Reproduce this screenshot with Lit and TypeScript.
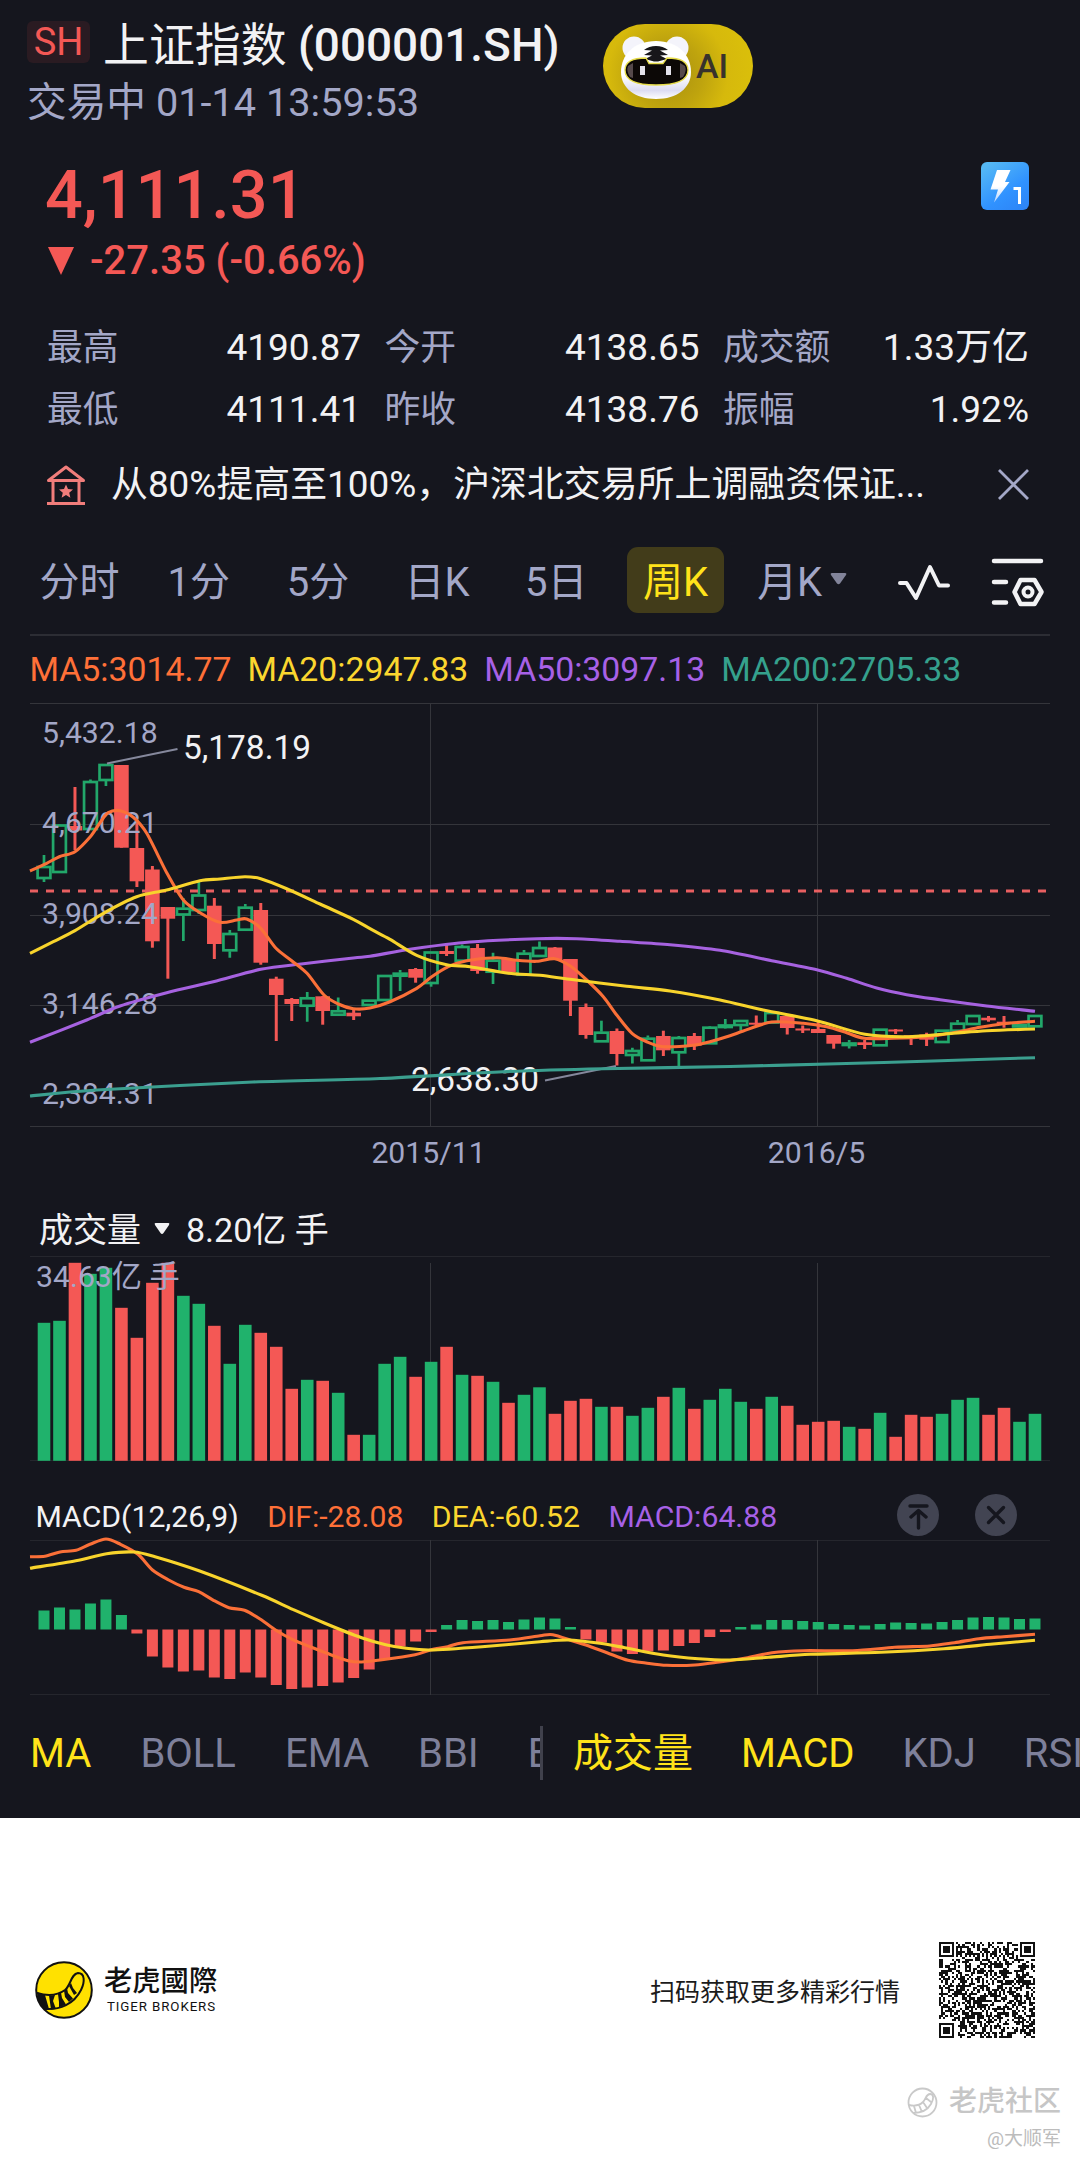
import { LitElement, css, html, svg } from "lit";
import { customElement, property } from "lit/decorators.js";
import { classMap } from "lit/directives/class-map.js";

type Point = [number, number];
// up/down, high, body top, body bottom, low (canvas y)
type Candle = [string, number, number, number, number];

const FIRST_X = 44;
const STEP = 15.484;
const MONTH_LINES = [430.5, 817.5];

const centerX = (i: number) => FIRST_X + i * STEP;

const CANDLES: Candle[] = [
  ["u", 855, 866, 879, 882], ["u", 824, 824.5, 873, 873], ["d", 787, 826, 830.5, 850],
  ["u", 779.5, 781, 830, 830], ["u", 764, 764, 781, 786], ["d", 765, 765, 847.7, 847.7],
  ["d", 820, 848, 881.3, 887], ["d", 866, 869.5, 941.3, 947.7], ["d", 907, 907, 918.7, 978.7],
  ["u", 898, 907.7, 915.5, 941], ["u", 882, 894.5, 911, 914], ["d", 898, 905.7, 944, 959],
  ["u", 930, 933, 951.3, 957.7], ["u", 904, 906.7, 930.7, 930.7], ["d", 903, 910, 962.7, 964.7],
  ["d", 976.7, 978.7, 995, 1041], ["d", 998, 999, 1004, 1021], ["u", 992, 997.3, 1006.7, 1021.7],
  ["d", 996, 996.3, 1011, 1024.7], ["u", 997.5, 1010.3, 1015.7, 1015.7], ["d", 1010, 1012.7, 1016.3, 1020],
  ["u", 999.7, 999.7, 1006, 1006], ["u", 975, 975, 1001, 1001], ["u", 970, 972.7, 976.7, 991],
  ["d", 968, 969, 977.7, 982.7], ["u", 951.5, 951.5, 984, 986.7], ["d", 943.5, 951, 954, 956],
  ["u", 944.5, 946, 961.7, 961.7], ["d", 944, 948, 971, 973.7], ["u", 952.7, 959.7, 972.7, 984],
  ["d", 958, 959, 972, 972], ["u", 950, 952.7, 975.7, 975.7], ["u", 941.5, 947, 957, 957],
  ["d", 947, 947.5, 960, 960], ["d", 959, 959, 1000.7, 1016], ["d", 1003.5, 1007, 1035, 1038.7],
  ["u", 1020.7, 1031.7, 1042.3, 1042.3], ["d", 1028.5, 1031, 1054, 1065.5], ["u", 1047.7, 1050, 1056, 1063.5],
  ["u", 1035.5, 1037.7, 1061.3, 1061.3], ["d", 1030.7, 1036, 1050.3, 1056], ["u", 1036, 1037, 1053.3, 1066],
  ["d", 1033, 1036, 1045.7, 1050], ["u", 1026, 1026.7, 1044.3, 1044.3], ["u", 1019, 1024.5, 1027, 1028.5],
  ["u", 1020, 1020, 1026, 1030.7], ["d", 1015.5, 1022.7, 1024.7, 1027], ["u", 1011, 1012, 1023.5, 1023.5],
  ["d", 1015.5, 1016, 1028, 1034.5], ["d", 1025.5, 1028.5, 1030.5, 1033], ["d", 1022, 1029, 1033, 1033],
  ["d", 1035, 1035, 1043.7, 1048.7], ["u", 1040, 1042.5, 1046, 1048.5], ["d", 1040, 1042.3, 1045, 1049],
  ["u", 1028.7, 1028.7, 1046.3, 1046.3], ["d", 1029, 1029.5, 1031.5, 1034], ["d", 1035, 1035.3, 1037.5, 1045],
  ["d", 1032.7, 1034.5, 1039.7, 1046], ["u", 1029.7, 1029.7, 1043, 1043], ["u", 1020, 1022.7, 1031.7, 1031.7],
  ["u", 1015, 1015, 1025, 1025], ["d", 1016, 1017.7, 1020.3, 1021.7], ["d", 1016, 1021.7, 1023.7, 1027.7],
  ["u", 1024, 1024, 1026.7, 1026.7], ["u", 1015, 1015, 1027.3, 1027.3]
];

const VOLUMES = [
  138, 140, 198, 187, 193, 153, 123, 178, 198, 165, 157, 135, 97, 136, 128, 114, 72, 81, 80, 68, 26, 26,
  97, 104, 84, 99, 114, 86, 85, 79, 58, 66, 73.5, 47, 60, 62, 54, 54, 45, 53, 64, 73, 52, 61, 72, 59, 52,
  64, 55, 36, 39, 40, 34, 32, 48, 24, 46, 44, 47, 61, 63, 46, 53, 39, 47
];

const MACD_BARS = [
  19, 22, 20, 26, 30, 14.5, -4, -27, -38, -42, -41, -48, -49.5, -43, -48, -55.5, -59.5, -58, -56.5, -53,
  -48.5, -40, -30, -17, -12, -2.5, 4.5, 9.5, 8.5, 9.5, 7.5, 10, 12, 11, 2.5, -10, -13, -22, -24.5, -22,
  -21, -16.5, -13.5, -7.5, -2.5, 2.5, 5, 9.5, 9.5, 8.5, 7.5, 5.5, 4.5, 4, 5.5, 7, 6.5, 6, 7.5, 9.5, 12,
  12.5, 12, 10.5, 11
];

const MA5: Point[] = [
  [30, 871], [46.7, 863.3], [59.3, 856.7], [75, 851.7], [90.3, 836.7], [100, 822.7], [108.3, 812.7],
  [120, 810.7], [133.3, 817.3], [146.7, 833.3], [166.7, 872.7], [183.3, 900], [200, 912.7], [220, 922.3],
  [236.7, 920], [246.7, 919], [260.7, 928.3], [276, 948.3], [291.7, 960.7], [307, 973.3], [324, 995],
  [338.3, 1004], [353.3, 1008.7], [370, 1008], [390, 1001.7], [416.7, 988.3], [431, 977.3], [448.3, 966.7],
  [466.7, 960.7], [496.7, 957.7], [516.7, 960.3], [536.7, 961.3], [554.7, 958.7], [570.3, 966],
  [586.7, 980], [603.3, 996.7], [616.7, 1015], [632, 1033.3], [646.7, 1041.7], [663.3, 1046.7],
  [693.3, 1045.3], [710, 1041.7], [730, 1035.7], [743.3, 1031], [771.7, 1022], [803.3, 1023.3],
  [826.7, 1026.7], [846.7, 1032.7], [864.3, 1038.3], [893.3, 1038.3], [926.7, 1036.7], [953.3, 1032.7],
  [980, 1027.3], [1003.3, 1023.7], [1035, 1021.3]
];

const MA20: Point[] = [
  [30, 953.3], [53.3, 941.7], [75, 930.7], [103.3, 913.3], [136.7, 896.7], [166.7, 890], [200, 880.7],
  [220, 879], [245, 876.7], [260.7, 878.7], [286.7, 888.7], [320, 904], [353.3, 919.3], [370, 928.7],
  [390, 939.3], [416.7, 955.3], [446.7, 964.7], [470, 966.7], [508.3, 973.3], [540, 975.3], [570, 979.3],
  [626.7, 986.3], [670, 991], [720, 1000], [763.3, 1010], [816.7, 1020.7], [865, 1034.3], [906.7, 1036.7],
  [953.3, 1033.3], [986.7, 1030.7], [1035, 1029]
];

const MA50: Point[] = [
  [30, 1042.3], [86.7, 1020], [120, 1006], [166.7, 992.7], [213.3, 981.7], [260.7, 969.3], [303.3, 963.7],
  [353.3, 958], [370, 956.3], [413.3, 948.7], [470, 942], [536.7, 938.7], [576.7, 938.7], [620, 941.3],
  [670, 944.7], [720, 950.3], [771.7, 960.7], [816.7, 969.7], [846.7, 978.3], [876.7, 988], [906.7, 994.7],
  [940, 999.7], [986.7, 1006], [1035, 1011.3]
];

const MA200: Point[] = [
  [30, 1096], [97, 1090], [253, 1082], [380, 1078.5], [503, 1071.7], [603, 1068.7], [730, 1066.5],
  [837, 1063.7], [933, 1061], [1035, 1057.7]
];

const DIF: Point[] = [
  [30, 1556.7], [44.8, 1556.3], [60, 1552], [76, 1550.3], [90, 1544.3], [106, 1539], [120.5, 1544.3],
  [138, 1554.3], [152.5, 1570], [168.7, 1580], [184, 1587.3], [198.7, 1591.7], [213.5, 1600.3],
  [229, 1607.7], [244.5, 1610.3], [260, 1619], [275.5, 1630], [292.7, 1639.7], [310, 1646.7],
  [327, 1653.3], [348, 1660.7], [361.6, 1662], [382, 1659.7], [415, 1654.7], [430.4, 1650],
  [447.7, 1646.7], [463, 1642.7], [509.6, 1640], [540, 1635.7], [552.8, 1634.7], [572, 1640.7],
  [586, 1645], [607, 1652.7], [628, 1660.3], [645.7, 1663], [666.8, 1665.3], [694.9, 1665],
  [719.4, 1662], [747.5, 1657.7], [772, 1652.7], [803.6, 1650.7], [852.7, 1650.7], [894.8, 1647.3],
  [929.9, 1646], [954.4, 1642.7], [979, 1638.7], [1003.5, 1636.7], [1035, 1634.3]
];

const DEA: Point[] = [
  [30, 1568.3], [75.8, 1560.7], [106.7, 1553.7], [134, 1552], [155, 1556.7], [199.7, 1571],
  [261.7, 1595.3], [292.7, 1609.3], [323.7, 1622.7], [361.6, 1637.7], [385.7, 1644.7], [406.3, 1648.3],
  [430.4, 1650], [482, 1646.7], [540, 1641.7], [568.6, 1640], [600, 1643.3], [624.7, 1647.7],
  [663.3, 1655], [698.4, 1658.7], [730, 1660], [768.5, 1657.3], [810.6, 1654.3], [880.8, 1652.3],
  [943.9, 1648.7], [993, 1644], [1035, 1640.3]
];

// smooth path through all points
function curve(points: Point[]): string {
  let d = `M${points[0][0]} ${points[0][1]}`;
  for (let i = 0; i < points.length - 1; i++) {
    const p0 = points[Math.max(i - 1, 0)];
    const p1 = points[i];
    const p2 = points[i + 1];
    const p3 = points[Math.min(i + 2, points.length - 1)];
    const c1 = [p1[0] + (p2[0] - p0[0]) / 7, p1[1] + (p2[1] - p0[1]) / 7];
    const c2 = [p2[0] - (p3[0] - p1[0]) / 7, p2[1] - (p3[1] - p1[1]) / 7];
    d += `C${c1[0].toFixed(1)} ${c1[1].toFixed(1)} ${c2[0].toFixed(1)} ${c2[1].toFixed(1)} ${p2[0]} ${p2[1]}`;
  }
  return d;
}

function qrPath(size: number): string {
  const inFinder = (r: number, c: number) =>
    (r < 8 && c < 8) || (r < 8 && c >= size - 8) || (r >= size - 8 && c < 8);
  let seed = 20917;
  let d = "";
  for (let r = 0; r < size; r++) {
    for (let c = 0; c < size; c++) {
      seed = (seed * 1103515245 + 12345) % 2147483648;
      if (inFinder(r, c)) continue;
      const timing = r === 6 || c === 6;
      const dark = timing ? (r + c) % 2 === 0 : seed / 2147483648 > 0.5;
      if (dark) d += `M${c} ${r}h1v1h-1z`;
    }
  }
  for (const [x, y] of [[0, 0], [size - 7, 0], [0, size - 7]]) {
    d += `M${x} ${y}h7v7h-7zM${x + 1} ${y + 1}v5h5v-5zM${x + 2} ${y + 2}h3v3h-3z`;
  }
  return d;
}

@customElement("quote-header")
export class QuoteHeader extends LitElement {
  render() {
    return html`
      <header class="top">
        <div class="names">
          <div class="title">
            <span class="badge">SH</span>
            <span class="name"><span class="zh">上证指数</span> (000001.SH)</span>
          </div>
          <div class="status">交易中 01-14 13:59:53</div>
        </div>
        <div class="ai">
          <svg class="tiger" width="90" height="84" viewBox="0 0 90 84">
            <defs>
              <linearGradient id="head" x1="0" y1="0" x2="0" y2="1">
                <stop offset="0.6" stop-color="#fff" />
                <stop offset="0.85" stop-color="#dcdcf2" />
                <stop offset="1" stop-color="#fff" />
              </linearGradient>
            </defs>
            <circle cx="31" cy="24" r="11.500" fill="#f4f4fb" />
            <circle cx="74" cy="24" r="11.500" fill="#f4f4fb" />
            <path d="M53 17C75 17 88 31 88 48C88 64 74 75 53 75C32 75 18 64 18 48C18 31 31 17 53 17Z" fill="url(#head)" />
            <path d="M41 26q5-4 12-4t12 4l-8 .5l8 4.500q-4 0-8 .5l7 3.500-9 2.500h-4l-9-2.500 7-3.500q-4-.5-8-.5l8-4.500z" fill="#17161a" />
            <path d="M43 34Q22 34 22 46Q22 61 53 61Q85 61 85 46Q85 34 64 34L60 39.500H46Z" fill="#0c0806" stroke="#e6dc4a" stroke-width="1.300" />
            <path d="M25 42q-2 5 2 11l3 1V39zM82 42q2 5-2 11l-3 1V39z" fill="#55494a" />
            <rect x="37" y="42" width="5" height="9" fill="#e4e2ea" />
            <rect x="63" y="42" width="5" height="9" fill="#e4e2ea" />
          </svg>
          <span class="ai-text">AI</span>
        </div>
      </header>
      <section class="quote">
        <div>
          <div class="price">4,111.31</div>
          <div class="change">
            <svg width="27" height="28" viewBox="0 0 27 28"><path d="M0 0H26L13 28Z" fill="#f45855" /></svg>
            <span>-27.35 (-0.66%)</span>
          </div>
        </div>
        <svg class="level" width="48" height="48" viewBox="0 0 48 48">
          <defs>
            <linearGradient id="blue" x1="0.200" y1="0" x2="0.900" y2="1">
              <stop offset="0" stop-color="#55b9f5" />
              <stop offset="0.6" stop-color="#3092ff" />
              <stop offset="1" stop-color="#2d84f6" />
            </linearGradient>
            <linearGradient id="bolt" x1="0" y1="0" x2="0" y2="1">
              <stop offset="0.5" stop-color="#fff" />
              <stop offset="1" stop-color="#b4d4ff" />
            </linearGradient>
          </defs>
          <rect width="48" height="48" rx="6" fill="url(#blue)" />
          <path d="M16 8H29.500L24 20H28.500L13 40.500L17 27.500H9.500Z" fill="url(#bolt)" />
          <path d="M32.500 25H40V42H37V28H32.500Z" fill="#fff" />
        </svg>
      </section>
    `;
  }

  static styles = css`
    :host {
      display: block;
    }
    .top {
      display: flex;
      height: 141px;
      padding: 14px 0 0 27px;
      box-sizing: content-box;
    }
    .names {
      width: 576px;
    }
    .title {
      display: flex;
      align-items: center;
      gap: 13px;
      height: 60px;
    }
    .badge {
      width: 63px;
      height: 42px;
      margin-bottom: 5px;
      line-height: 43px;
      border-radius: 6px;
      background: #2a1b22;
      color: #f45855;
      font-size: 38px;
      text-align: center;
    }
    .name {
      padding-top: 1px;
      color: #f2f2f4;
      font-size: 45.900px;
      font-weight: 500;
      line-height: 60px;
      white-space: nowrap;
    }
    .zh {
      font-weight: 400;
    }
    .status {
      color: #a3a7c7;
      font-size: 39.700px;
      line-height: 57px;
    }
    .ai {
      display: flex;
      width: 150px;
      height: 84px;
      margin-top: 10px;
      border-radius: 42px;
      background: radial-gradient(circle at 65px 50px, #a88f10 0, #bfa40e 35px, #d6b90c 60px, #dcc20a 100%);
    }
    .ai-text {
      margin-left: 3px;
      color: #38322c;
      font-size: 34px;
      font-weight: 500;
      line-height: 85px;
    }
    .quote {
      display: flex;
      justify-content: space-between;
      height: 131px;
      padding: 0 51px 0 45px;
    }
    .price {
      color: #f45855;
      font-size: 66.600px;
      font-weight: 500;
      line-height: 80px;
    }
    .change {
      display: flex;
      align-items: center;
      gap: 15px;
      height: 51px;
      padding-left: 3px;
      color: #f45855;
      font-size: 40px;
      font-weight: 500;
    }
    .level {
      margin-top: 7px;
    }
  `;
}

@customElement("quote-stats")
export class QuoteStats extends LitElement {
  stats = [
    ["最高", "4190.87"],
    ["今开", "4138.65"],
    ["成交额", "1.33万亿"],
    ["最低", "4111.41"],
    ["昨收", "4138.76"],
    ["振幅", "1.92%"]
  ];

  render() {
    return html`
      <div class="stats">
        ${this.stats.map(
          ([label, value]) => html`
            <div class="stat"><span class="label">${label}</span><span>${value}</span></div>
          `
        )}
      </div>
      <div class="news">
        <svg width="40" height="42" viewBox="0 0 40 42" fill="none" stroke="#f17d7b" stroke-width="3">
          <path d="M2.500 16.500L20 3L37.500 16.500Z" stroke-linejoin="round" />
          <path d="M7 17V39M33 17V39M1 39.500H39" />
          <path d="M20 20.500l2 4.600 5 .4-3.800 3.300 1.200 4.900-4.400-2.600-4.400 2.600 1.200-4.900-3.800-3.300 5-.4z" fill="#f17d7b" stroke="none" />
        </svg>
        <span class="news-text">从80%提高至100%，沪深北交易所上调融资保证...</span>
        <svg width="31" height="31" viewBox="0 0 31 31" stroke="#a3a7c7" stroke-width="2.800">
          <path d="M1 1L30 30M30 1L1 30" />
        </svg>
      </div>
    `;
  }

  static styles = css`
    .stats {
      display: grid;
      grid-template-columns: 314px 315px 306px;
      grid-auto-rows: 62px;
      column-gap: 23.500px;
      padding: 31px 0 0 47px;
    }
    .stat {
      display: flex;
      justify-content: space-between;
      color: #f2f2f4;
      font-size: 37px;
      line-height: 62px;
    }
    .label {
      color: #a3a7c7;
      font-size: 35.800px;
    }
    .news {
      display: flex;
      align-items: center;
      height: 87px;
      padding: 0 51px 2px 46px;
    }
    .news-text {
      flex: 1;
      margin-left: 25px;
      color: #f2f2f4;
      font-size: 36.900px;
      line-height: 60px;
      white-space: nowrap;
    }
  `;
}

@customElement("period-tabs")
export class PeriodTabs extends LitElement {
  @property({ type: String }) active = "周K";

  periods = ["分时", "1分", "5分", "日K", "5日", "周K"];

  render() {
    return html`
      <nav class="tabs">
        ${this.periods.map(
          (p) => html`
            <div class="cell">
              <span class=${classMap({ tab: true, active: p === this.active })}>${p}</span>
            </div>
          `
        )}
        <div class="month">
          <span>月K</span>
          <svg width="17" height="12" viewBox="0 0 17 12"><path d="M2 0H15Q17 0 16 2L10 10.500Q8.500 12 7 10.500L1 2Q0 0 2 0Z" fill="#82849a" /></svg>
        </div>
        <svg class="wave" width="54" height="38" viewBox="0 0 54 38" fill="none" stroke="#f2f2f4" stroke-width="4" stroke-linecap="round" stroke-linejoin="round">
          <path d="M3 20H9.500L19 35L33 4L42 22.500H51" />
        </svg>
        <svg class="settings" width="54" height="52" viewBox="0 0 54 52" fill="none" stroke="#f2f2f4" stroke-width="4.500" stroke-linecap="round" stroke-linejoin="round">
          <path d="M3 5H50M3 26H15M3 46.500H15" />
          <path d="M29.500 24H43.500L50.500 36L43.500 48H29.500L23.500 36Z" />
          <circle cx="37" cy="36" r="4.500" stroke-width="4" />
        </svg>
      </nav>
    `;
  }

  static styles = css`
    .tabs {
      display: flex;
      align-items: center;
      height: 98px;
      padding: 1px 0 5px 20px;
      margin: 0 30px 0 0;
      color: #a3a7c7;
      font-size: 40px;
    }
    .cell {
      display: flex;
      justify-content: center;
      width: 119.200px;
    }
    .tab {
      height: 62px;
      padding: 4px 15.500px 0;
      border-radius: 11px;
      line-height: 63px;
    }
    .active {
      background: #423c1a;
      color: #ffe31a;
    }
    .month {
      display: flex;
      align-items: center;
      gap: 8px;
      width: 161px;
      padding-left: 22px;
      line-height: 63px;
    }
    .month span {
      padding-top: 4px;
    }
    .month svg {
      margin-top: -2px;
    }
    .wave {
      margin: 4px 41px 0 -21px;
    }
    .settings {
      margin: 3px 0 0 -1px;
    }
  `;
}

@customElement("stock-charts")
export class StockCharts extends LitElement {
  grid(top: number, bottom: number) {
    return MONTH_LINES.map((x) => svg`<path class="grid" d="M${x} ${top}V${bottom}" />`);
  }

  candle([dir, high, top, bottom, low]: Candle, i: number) {
    const x = centerX(i);
    if (dir === "u") {
      const h = Math.max(bottom - top - 2, 1.5);
      return svg`
        <path class="up" d="M${x} ${high}V${top}M${x} ${bottom}V${low}" />
        <rect class="up" x=${x - 6.4} y=${top + 1} width="12.8" height=${h} />
      `;
    }
    return svg`
      <path class="down" d="M${x} ${high}V${low}" />
      <rect class="down-body" x=${x - 7.3} y=${top} width="14.6" height=${bottom - top} />
    `;
  }

  renderPrice() {
    const labels: [string, number][] = [
      ["5,432.18", 743], ["4,670.21", 832.7], ["3,908.24", 923.7], ["3,146.28", 1013.7], ["2,384.31", 1104.3]
    ];
    return html`
      <svg class="chart" width="1080" height="501" viewBox="0 703 1080 501">
        ${[703.5, 824.5, 915.5, 1005.5, 1126.5].map((y) => svg`<path class="grid" d="M30 ${y}H1050" />`)}
        ${this.grid(704, 1127)}
        <text class="mark" x="411" y="1090.700">2,638.30</text>
        <text class="mark" x="183" y="759">5,178.19</text>
        ${CANDLES.map((c, i) => this.candle(c, i))}
        <path class="leader" d="M107 763.500L177.500 749M545 1080.500L616 1066" />
        <path class="last" d="M30 891H1050" />
        ${labels.map(([t, y]) => svg`<text class="axis" x="42" y=${y}>${t}</text>`)}
        <path class="line teal" d=${curve(MA200)} />
        <path class="line purple" d=${curve(MA50)} />
        <path class="line orange" d=${curve(MA5)} />
        <path class="line yellow" d=${curve(MA20)} />
        <text class="axis" x="428.500" y="1162.700" text-anchor="middle">2015/11</text>
        <text class="axis" x="816.500" y="1162.700" text-anchor="middle">2016/5</text>
      </svg>
    `;
  }

  renderVolume() {
    return html`
      <div class="vol-head">
        <span>成交量</span>
        <svg width="16" height="12" viewBox="0 0 16 12"><path d="M1.500 0H14.500Q16 0 15 2L9.500 10Q8 12 6.500 10L1 2Q0 0 1.500 0Z" fill="#f2f2f4" /></svg>
        <span>8.20亿 手</span>
      </div>
      <svg class="chart" width="1080" height="234" viewBox="0 1256 1080 234">
        <path class="grid dim" d="M30 1256.500H1050M30 1460.500H1050" />
        ${this.grid(1263, 1461)}
        ${VOLUMES.map(
          (v, i) => svg`<rect class=${CANDLES[i][0] === "u" ? "green" : "red"} x=${centerX(i) - 6.3} y=${1460.8 - v} width="12.6" height=${v} />`
        )}
        <text class="axis" x="36" y="1287.300">34.63亿 手</text>
      </svg>
    `;
  }

  renderMacd() {
    const zero = 1629.5;
    return html`
      <div class="macd-head">
        <span>MACD(12,26,9)</span>
        <span class="orange-text">DIF:-28.08</span>
        <span class="yellow-text">DEA:-60.52</span>
        <span class="purple-text">MACD:64.88</span>
        <div class="actions">
          <svg width="42" height="42" viewBox="0 0 42 42" fill="none" stroke="#15161e" stroke-width="3.400" stroke-linecap="round" stroke-linejoin="round">
            <circle cx="21" cy="21" r="21" fill="#424452" stroke="none" />
            <path d="M13 12H30M21.500 34V17M14 23L21.500 16.500L29 23" />
          </svg>
          <svg width="42" height="42" viewBox="0 0 42 42" fill="none" stroke="#15161e" stroke-width="3.400" stroke-linecap="round">
            <circle cx="21" cy="21" r="21" fill="#424452" stroke="none" />
            <path d="M13.500 13.500L28.500 28.500M28.500 13.500L13.500 28.500" />
          </svg>
        </div>
      </div>
      <svg class="chart" width="1080" height="180" viewBox="0 1540 1080 180">
        <path class="grid dim" d="M30 1540.500H1050M30 1694.500H1050" />
        ${this.grid(1540, 1695)}
        ${MACD_BARS.map(
          (v, i) => svg`<rect class=${v > 0 ? "green" : "red"} x=${centerX(i) - 5.5} y=${v > 0 ? zero - v : zero} width="11" height=${Math.abs(v)} />`
        )}
        <path class="line orange" d=${curve(DIF)} />
        <path class="line yellow" d=${curve(DEA)} />
      </svg>
    `;
  }

  render() {
    return html`
      <div class="ma">
        <span class="orange-text">MA5:3014.77</span>
        <span class="yellow-text">MA20:2947.83</span>
        <span class="purple-text">MA50:3097.13</span>
        <span class="teal-text">MA200:2705.33</span>
      </div>
      ${this.renderPrice()} ${this.renderVolume()} ${this.renderMacd()}
    `;
  }

  static styles = css`
    .ma {
      display: flex;
      gap: 16px;
      height: 67px;
      padding-left: 29.500px;
      margin: 0 30px 0 0;
      font-size: 33.800px;
      line-height: 68px;
      white-space: nowrap;
    }
    .chart {
      display: block;
      overflow: visible;
    }
    .orange-text { color: #ff7038; }
    .yellow-text { color: #fbd62f; }
    .purple-text { color: #a761e6; }
    .teal-text { color: #35a18d; }
    .grid {
      stroke: #34353b;
      stroke-width: 1;
    }
    .dim {
      stroke: #25262d;
    }
    .axis {
      fill: #a3a7c7;
      font-size: 30.2px;
    }
    .mark {
      fill: #f2f2f4;
      font-size: 33.4px;
    }
    .up {
      fill: none;
      stroke: #22a76a;
      stroke-width: 2.7;
    }
    .down {
      stroke: #f45855;
      stroke-width: 3;
    }
    .down-body, .red {
      fill: #f45855;
    }
    .green {
      fill: #20b26c;
    }
    .leader {
      stroke: #85889c;
      stroke-width: 2;
    }
    .last {
      stroke: #e85f61;
      stroke-width: 3.2;
      stroke-dasharray: 8 8;
    }
    .line {
      fill: none;
      stroke-width: 3.1;
      stroke-linejoin: round;
    }
    .orange { stroke: #fb7038; }
    .yellow { stroke: #f8d42c; }
    .purple { stroke: #a662e0; }
    .teal { stroke: #3b9f8f; }
    .vol-head {
      display: flex;
      align-items: center;
      height: 47px;
      padding: 0 0 5px 39px;
      color: #f2f2f4;
      font-size: 34px;
    }
    .vol-head svg {
      margin: 3px 16px 0 13px;
    }
    .macd-head {
      display: flex;
      gap: 28.500px;
      height: 50px;
      padding: 0 63px 0 35.500px;
      color: #f2f2f4;
      font-size: 30.200px;
      line-height: 53px;
      white-space: nowrap;
    }
    .actions {
      display: flex;
      align-items: center;
      gap: 36px;
      margin-left: auto;
    }
  `;
}

@customElement("indicator-tabs")
export class IndicatorTabs extends LitElement {
  main = ["MA", "BOLL", "EMA", "BBI", "ENE"];
  sub = ["成交量", "MACD", "KDJ", "RSI"];
  selected = ["MA", "成交量", "MACD"];

  tab(name: string) {
    return html`<span class=${classMap({ on: this.selected.includes(name) })}>${name}</span>`;
  }

  render() {
    return html`
      <div class="row">
        <div class="list main">${this.main.map((n) => this.tab(n))}</div>
        <div class="split"></div>
        <div class="list sub">${this.sub.map((n) => this.tab(n))}</div>
      </div>
    `;
  }

  static styles = css`
    .row {
      display: flex;
      align-items: center;
      height: 68px;
      padding-bottom: 30px;
      overflow: hidden;
      color: #7e809a;
      font-size: 40px;
      line-height: 70px;
      white-space: nowrap;
    }
    .list {
      display: flex;
      gap: 49px;
      overflow: hidden;
    }
    .main {
      width: 510px;
      padding-left: 30px;
    }
    .split {
      width: 3px;
      height: 54px;
      margin-top: -3px;
      background: #40414c;
    }
    .sub {
      flex: 1;
      padding-left: 30px;
      gap: 48px;
    }
    .on {
      color: #ffe31a;
    }
  `;
}

@customElement("share-footer")
export class ShareFooter extends LitElement {
  render() {
    return html`
      <footer class="footer">
        <svg width="58" height="58" viewBox="0 0 58 58">
          <circle cx="29" cy="29" r="27.800" fill="#ffe100" stroke="#111" stroke-width="2" />
          <path d="M2 32Q19 37 30 29C36 24 36 13 43 12C50 12 50 21 46 29C39 43 25 49 10 48" fill="none" stroke="#111" stroke-width="2" />
          <path d="M2 31L10 34L14 48L9 48Q2 41 2 31ZM14 34.500L20 34L18 40L21 48L16 48.500ZM23 33L26 31.500L27 37L31 43.500L24 46.500L24 41ZM29 29.500L32 27L33 32L38 37.500L34 41L30 36ZM34 25L36 22L38 27L42 32L39 34Z" fill="#111" />
        </svg>
        <div class="brand">
          <div class="zh">老虎國際</div>
          <div class="en">TIGER BROKERS</div>
        </div>
        <div class="tip">扫码获取更多精彩行情</div>
        <svg class="qr" width="96" height="96" viewBox="0 0 45 45" shape-rendering="crispEdges">
          <path d=${qrPath(45)} fill="#111" fill-rule="evenodd" />
        </svg>
        <div class="watermark">
          <div class="community">
            <svg width="31" height="31" viewBox="0 0 31 31" fill="none" stroke="#c9c9c9" stroke-width="1.800">
              <circle cx="15.500" cy="15.500" r="14" />
              <path d="M2 18Q11 20 16 15C19 12 19 7 23 7C27 7 27 12 24 17C20 24 13 26 6 26M7 19l2 7M12 18l3 7M16 15l4 6M19 11l5 4" />
            </svg>
            <span>老虎社区</span>
          </div>
          <div class="author">@大顺军</div>
        </div>
      </footer>
    `;
  }

  static styles = css`
    .footer {
      position: relative;
      display: flex;
      align-items: center;
      height: 345px;
      padding: 0 45px 2px 35px;
      box-sizing: border-box;
      background: #fff;
      color: #111;
    }
    .brand {
      margin: 0 auto 0 11px;
    }
    .zh {
      font-size: 28.300px;
      font-weight: 500;
      line-height: 32px;
      margin-top: 2px;
    }
    .en {
      padding-left: 3px;
      font-size: 13.300px;
      letter-spacing: 0.9px;
      line-height: 18px;
    }
    .tip {
      margin-right: 39px;
      color: #1b1b1b;
      font-size: 25px;
    }
    .watermark {
      position: absolute;
      right: 19px;
      bottom: 12px;
      text-align: right;
      color: #c6c6c6;
    }
    .community {
      display: flex;
      align-items: center;
      gap: 11px;
      font-size: 28px;
      font-weight: 500;
      line-height: 40px;
    }
    .author {
      margin-top: 5px;
      color: #bcbcbc;
      font-size: 19px;
      line-height: 24px;
    }
  `;
}

@customElement("app-root")
export class AppRoot extends LitElement {
  render() {
    return html`
      <main class="screen">
        <quote-header></quote-header>
        <quote-stats></quote-stats>
        <period-tabs></period-tabs>
        <div class="divider"></div>
        <stock-charts></stock-charts>
        <indicator-tabs></indicator-tabs>
      </main>
      <share-footer></share-footer>
    `;
  }

  static styles = css`
    :host {
      display: block;
      width: 1080px;
      height: 2163px;
      overflow: hidden;
      font-family: Roboto, "Noto Sans CJK SC", sans-serif;
    }
    .screen {
      height: 1818px;
      overflow: hidden;
      background: #15161e;
    }
    quote-stats,
    period-tabs,
    stock-charts,
    indicator-tabs,
    share-footer {
      display: block;
    }
    .divider {
      height: 2px;
      margin: 0 30px;
      background: #2c2d34;
    }
  `;
}
